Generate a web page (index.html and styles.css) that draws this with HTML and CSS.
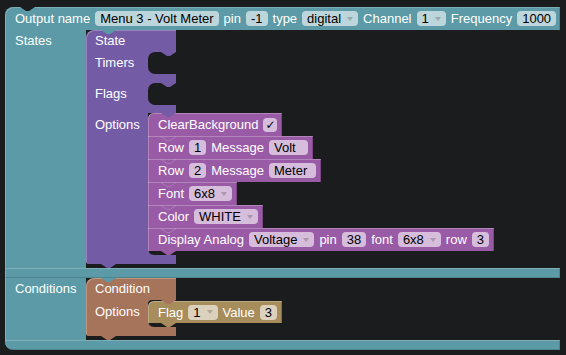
FILE: index.html
```html
<!DOCTYPE html>
<html lang="en">
<head>
  <meta charset="UTF-8" />
  <meta name="viewport" content="width=device-width, initial-scale=1" />
  <title>Output block</title>
  <link rel="stylesheet" href="styles.css">
</head>
<body>

  <div class="output">
    <!-- header row -->
    <div class="head">
      <span>Output name</span>
      <span class="field">Menu 3 - Volt Meter</span>
      <span>pin</span>
      <span class="field">-1</span>
      <span>type</span>
      <span class="field dd">digital</span>
      <span>Channel</span>
      <span class="field dd">1</span>
      <span>Frequency</span>
      <span class="field">1000</span>
    </div>

    <!-- States input -->
    <div class="stmt">
      <div class="stmt-label">States</div>
      <div class="stmt-body">
        <div class="blk purple">
          <div class="prow">State</div>
          <div class="irow">
            <div class="ilabel">Timers</div>
            <div class="slot"></div>
          </div>
          <div class="pbar"></div>
          <div class="irow">
            <div class="ilabel">Flags</div>
            <div class="slot"></div>
          </div>
          <div class="pbar short"></div>
          <div class="orow">
            <div class="ilabel">Options</div>
            <div class="stack-slot">
              <div class="stack magenta">
                <div class="sblk first">ClearBackground <span class="field check">✓</span></div>
                <div class="sblk">Row <span class="field">1</span> Message <span class="field">Volt  </span></div>
                <div class="sblk">Row <span class="field">2</span> Message <span class="field">Meter </span></div>
                <div class="sblk">Font <span class="field dd">6x8</span></div>
                <div class="sblk">Color <span class="field dd">WHITE</span></div>
                <div class="sblk last">Display Analog <span class="field dd">Voltage</span> pin <span class="field">38</span> font <span class="field dd">6x8</span> row <span class="field">3</span></div>
              </div>
            </div>
          </div>
          <div class="pbar end"></div>
        </div>
      </div>
    </div>
    <div class="tbar"></div>

    <!-- Conditions input -->
    <div class="stmt">
      <div class="stmt-label">Conditions</div>
      <div class="stmt-body">
        <div class="blk brown">
          <div class="prow">Condition</div>
          <div class="orow">
            <div class="ilabel tall">Options</div>
            <div class="stack-slot">
              <div class="stack khaki">
                <div class="sblk first last slim">Flag <span class="field dd">1</span> Value <span class="field">3</span></div>
              </div>
            </div>
          </div>
          <div class="pbar end"></div>
        </div>
      </div>
    </div>
    <div class="tbar end"></div>
  </div>

</body>
</html>
```

FILE: styles.css
```css
body {
  margin: 0;
  background: #1b1c1e;
  font-family: "Liberation Sans", Arial, sans-serif;
  font-size: 13px;
  color: #fff;
}

.output {
  --c: #5b9aa6;
  position: relative;
  width: 555px;
  margin: 7px 0 0 5px;
}
.purple { --c: #745ba6; }
.magenta { --c: #9a5ba6; }
.brown { --c: #a6745b; }
.khaki { --c: #a68d5b; }

/* notch cut into the top of the outer block */
.output::before {
  content: "";
  position: absolute;
  left: 15px;
  top: 0;
  width: 15px;
  height: 4px;
  background: #1b1c1e;
  clip-path: polygon(0 0, 100% 0, 60% 100%, 40% 100%);
  z-index: 2;
}

.head {
  display: flex;
  align-items: center;
  gap: 5px;
  height: 23px;
  padding-left: 10px;
  background: var(--c);
  border-radius: 8px 0 0 0;
  box-shadow: inset 1px 1px rgba(255, 255, 255, 0.2), inset -1px 0 rgba(0, 0, 0, 0.15);
}

.field {
  display: inline-flex;
  align-items: center;
  height: 15px;
  padding: 0 5px;
  border-radius: 4px;
  background: rgba(255, 255, 255, 0.6);
  color: #000;
  white-space: pre;
}
.dd::after {
  content: "";
  margin-left: 6px;
  border-left: 3.5px solid transparent;
  border-right: 3.5px solid transparent;
  border-top: 4px solid rgba(0, 0, 0, 0.2);
}
.check {
  width: 14px;
  height: 14px;
  padding: 0;
  justify-content: center;
  font-family: "DejaVu Sans", sans-serif;
  font-size: 12px;
}

/* statement inputs of the outer block */
.stmt {
  display: flex;
}
.stmt-label {
  flex: none;
  box-sizing: border-box;
  width: 81px;
  padding-left: 10px;
  line-height: 22px;
  background: var(--c);
  box-shadow: inset 1px 0 rgba(255, 255, 255, 0.2);
}
.stmt-body {
  position: relative;
  padding-bottom: 4px;
}
/* parent tab sitting in the child's notch */
.stmt-body::before,
.slot::before,
.stack-slot::before {
  content: "";
  position: absolute;
  left: 15px;
  top: 0;
  width: 15px;
  height: 4px;
  background: var(--c);
  clip-path: polygon(0 0, 100% 0, 60% 100%, 40% 100%);
  z-index: 2;
}
.tbar {
  position: relative;
  height: 10px;
  background: var(--c);
  box-shadow: inset 1px 1px rgba(255, 255, 255, 0.2), inset -1px -1px rgba(0, 0, 0, 0.15);
}
.tbar.end {
  border-radius: 0 0 0 8px;
}

/* tab under a block */
.tbar.end::after,
.pbar.end::after,
.sblk.last::after {
  content: "";
  position: absolute;
  left: 15px;
  top: 100%;
  width: 15px;
  height: 4px;
  background: var(--c);
  clip-path: polygon(0 0, 100% 0, 60% 100%, 40% 100%);
}
.sblk.last::after {
  left: 13px;
}

/* C-shaped blocks (State, Condition) */
.blk {
  position: relative;
}
.prow {
  box-sizing: border-box;
  width: 90px;
  height: 22px;
  line-height: 22px;
  padding-left: 9px;
  background: var(--c);
  border-radius: 8px 0 0 0;
  box-shadow: inset 1px 1px rgba(255, 255, 255, 0.25);
}
.irow {
  display: flex;
  width: 90px;
  background: var(--c);
}
.ilabel {
  flex: none;
  box-sizing: border-box;
  width: 62px;
  padding-left: 9px;
  line-height: 22px;
  box-shadow: inset 1px 0 rgba(255, 255, 255, 0.25);
}
.ilabel.tall {
  line-height: 24px;
}
.slot {
  position: relative;
  flex: 1;
  height: 22px;
  background: #1b1c1e;
  border-radius: 7px 0 0 7px;
}
.slot::before {
  left: 13px;
}
.pbar {
  position: relative;
  width: 90px;
  height: 9px;
  background: var(--c);
  box-shadow: inset 1px 0 rgba(255, 255, 255, 0.25);
}
.pbar.short {
  height: 8px;
}
.pbar.end {
  border-radius: 0 0 0 3px;
}
.orow {
  display: flex;
  background: linear-gradient(90deg, var(--c) 90px, transparent 90px);
}
.orow .ilabel {
  line-height: 23px;
}
.stack-slot {
  position: relative;
  padding-bottom: 4px;
  background: #1b1c1e;
  border-radius: 0 0 0 6px;
}
.brown .stack-slot {
  padding-top: 1px;
  border-radius: 4px 0 0 6px;
}
.stack-slot::before {
  left: 13px;
}

/* stacked statement blocks */
.stack {
  display: flex;
  flex-direction: column;
  align-items: flex-start;
}
.sblk {
  position: relative;
  display: flex;
  align-items: center;
  gap: 5px;
  height: 23px;
  padding: 0 5px 0 10px;
  background: var(--c);
  white-space: nowrap;
  box-shadow: inset 0 1px rgba(255, 255, 255, 0.25), inset 1px 0 rgba(255, 255, 255, 0.25), inset -1px 0 rgba(0, 0, 0, 0.2);
}
.sblk.first {
  border-radius: 6px 0 0 0;
}
.sblk.slim {
  height: 22px;
}
.sblk + .sblk::before {
  content: "";
  position: absolute;
  left: 13px;
  top: 0;
  width: 15px;
  height: 5px;
  background: rgba(255, 255, 255, 0.18);
  clip-path: polygon(0 0, 40% 80%, 60% 80%, 100% 0, 100% 20%, 60% 100%, 40% 100%, 0 20%);
}
```
